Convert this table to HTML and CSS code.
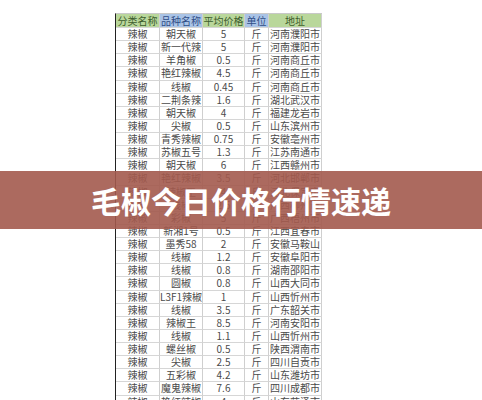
FILE: index.html
```html
<!DOCTYPE html>
<html lang="zh">
<head>
<meta charset="utf-8">
<link rel="stylesheet" href="styles.css">
</head>
<body>
<div class="page">
  <div class="sheet">
    <div class="c h g">分类名称</div><div class="c h b">品种名称</div><div class="c h g">平均价格</div><div class="c h b">单位</div><div class="c h g">地址</div>
    <div class="c">辣椒</div><div class="c">朝天椒</div><div class="c">5</div><div class="c">斤</div><div class="c">河南濮阳市</div>
    <div class="c">辣椒</div><div class="c">新一代辣</div><div class="c">5</div><div class="c">斤</div><div class="c">河南濮阳市</div>
    <div class="c">辣椒</div><div class="c">羊角椒</div><div class="c">0.5</div><div class="c">斤</div><div class="c">河南商丘市</div>
    <div class="c">辣椒</div><div class="c">艳红辣椒</div><div class="c">4.5</div><div class="c">斤</div><div class="c">河南商丘市</div>
    <div class="c">辣椒</div><div class="c">线椒</div><div class="c">0.45</div><div class="c">斤</div><div class="c">河南商丘市</div>
    <div class="c">辣椒</div><div class="c">二荆条辣</div><div class="c">1.6</div><div class="c">斤</div><div class="c">湖北武汉市</div>
    <div class="c">辣椒</div><div class="c">朝天椒</div><div class="c">4</div><div class="c">斤</div><div class="c">福建龙岩市</div>
    <div class="c">辣椒</div><div class="c">尖椒</div><div class="c">0.5</div><div class="c">斤</div><div class="c">山东滨州市</div>
    <div class="c">辣椒</div><div class="c">青秀辣椒</div><div class="c">0.75</div><div class="c">斤</div><div class="c">安徽亳州市</div>
    <div class="c">辣椒</div><div class="c">苏椒五号</div><div class="c">1.3</div><div class="c">斤</div><div class="c">江苏南通市</div>
    <div class="c">辣椒</div><div class="c">朝天椒</div><div class="c">6</div><div class="c">斤</div><div class="c">江西赣州市</div>
    <div class="c">辣椒</div><div class="c">艳红辣椒</div><div class="c">3.5</div><div class="c">斤</div><div class="c">河北邯郸市</div>
    <div class="c">辣椒</div><div class="c">辣椒王</div><div class="c">4</div><div class="c">斤</div><div class="c">河北保定市</div>
    <div class="c">辣椒</div><div class="c">线椒</div><div class="c">2.5</div><div class="c">斤</div><div class="c">广西柳州市</div>
    <div class="c">辣椒</div><div class="c">彩椒</div><div class="c">5</div><div class="c">斤</div><div class="c">广西梧州市</div>
    <div class="c">辣椒</div><div class="c">新湘1号</div><div class="c">0.5</div><div class="c">斤</div><div class="c">江西宜春市</div>
    <div class="c">辣椒</div><div class="c">墨秀58</div><div class="c">2</div><div class="c">斤</div><div class="c">安徽马鞍山</div>
    <div class="c">辣椒</div><div class="c">线椒</div><div class="c">1.2</div><div class="c">斤</div><div class="c">安徽阜阳市</div>
    <div class="c">辣椒</div><div class="c">线椒</div><div class="c">0.8</div><div class="c">斤</div><div class="c">湖南邵阳市</div>
    <div class="c">辣椒</div><div class="c">圆椒</div><div class="c">0.8</div><div class="c">斤</div><div class="c">山西大同市</div>
    <div class="c">辣椒</div><div class="c">L3F1辣椒</div><div class="c">1</div><div class="c">斤</div><div class="c">山西忻州市</div>
    <div class="c">辣椒</div><div class="c">线椒</div><div class="c">3.5</div><div class="c">斤</div><div class="c">广东韶关市</div>
    <div class="c">辣椒</div><div class="c">辣椒王</div><div class="c">8.5</div><div class="c">斤</div><div class="c">河南安阳市</div>
    <div class="c">辣椒</div><div class="c">线椒</div><div class="c">1.1</div><div class="c">斤</div><div class="c">山西忻州市</div>
    <div class="c">辣椒</div><div class="c">螺丝椒</div><div class="c">0.5</div><div class="c">斤</div><div class="c">陕西渭南市</div>
    <div class="c">辣椒</div><div class="c">尖椒</div><div class="c">2.5</div><div class="c">斤</div><div class="c">四川自贡市</div>
    <div class="c">辣椒</div><div class="c">五彩椒</div><div class="c">4.2</div><div class="c">斤</div><div class="c">山东潍坊市</div>
    <div class="c">辣椒</div><div class="c">魔鬼辣椒</div><div class="c">7.6</div><div class="c">斤</div><div class="c">四川成都市</div>
    <div class="c">辣椒</div><div class="c">艳红辣椒</div><div class="c">4</div><div class="c">斤</div><div class="c">山东菏泽市</div>
  </div>
  <div class="banner">毛椒今日价格行情速递</div>
</div>
</body>
</html>
```

FILE: styles.css
```css
html, body {
  margin: 0;
  padding: 0;
  background: #ffffff;
}
.page {
  position: relative;
  width: 482px;
  height: 400px;
  overflow: hidden;
  background: #ffffff;
}
.sheet {
  margin: 13px 0 0 115px;
  width: 206px;
  display: grid;
  grid-template-columns: 44px 43px 42px 24px 53px;
  grid-template-rows: 14px;
  grid-auto-rows: 13.13px;
  border-left: 1px solid #222;
  border-top: 1px solid #c8c8c8;
  font-family: "Noto Sans CJK SC", "Noto Sans", sans-serif;
  font-size: 10px;
  color: #4a4a4a;
}
.c {
  box-sizing: border-box;
  border-right: 1px solid #cfcfcf;
  border-bottom: 1px solid #d6d6d6;
  display: flex;
  align-items: center;
  justify-content: center;
  line-height: 1;
  white-space: nowrap;
}
.g {
  background: #b9d79b;
  color: #3c5c2c;
}
.b {
  background: #a9c3e6;
  color: #2f4e86;
}
.banner {
  position: absolute;
  left: 0;
  top: 171px;
  width: 482px;
  height: 58px;
  background: rgba(163, 90, 78, 0.9);
  color: #ffffff;
  font-family: "Noto Sans CJK SC", sans-serif;
  font-weight: 700;
  font-size: 30px;
  display: flex;
  align-items: center;
  justify-content: center;
}
```
